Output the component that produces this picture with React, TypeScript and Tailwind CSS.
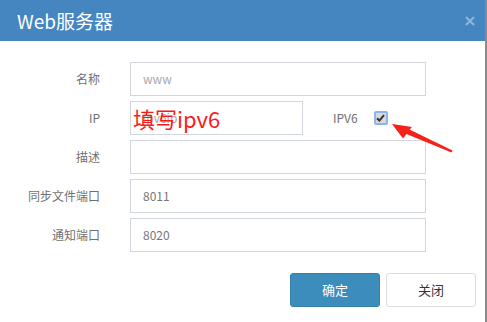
import React from 'react';

const font = { fontFamily: '"Noto Sans CJK SC", "Noto Sans", sans-serif' };

function Row({ label, children }: { label: string; children: React.ReactNode }) {
  return (
    <div className="flex items-center h-[34px]">
      <div className="w-[100px] text-right text-[12px] text-[#707070]">{label}</div>
      <div className="ml-[30px] flex items-center">{children}</div>
    </div>
  );
}

function Field({ value, placeholder, w = 'w-[296px]' }: { value?: string; placeholder?: string; w?: string }) {
  return (
    <div className={`${w} h-[34px] border border-[#d2d6de] flex items-center pl-[12px] text-[12px]`}>
      {value ? (
        <span className="text-[#777]">{value}</span>
      ) : (
        <span className="text-[#aaa]">{placeholder}</span>
      )}
    </div>
  );
}

export default function App() {
  return (
    <div className="w-[487px] h-[322px] flex bg-white overflow-hidden" style={font}>
      <div className="relative w-[485px] h-full flex flex-col">
        {/* Header */}
        <div className="h-[41px] bg-[#4586c1] flex items-center justify-between pl-[17px] pr-[10px]">
          <span className="text-white text-[19px] leading-none">Web服务器</span>
          <svg width="10" height="10" viewBox="0 0 10 10">
            <path d="M1 1 L9 9 M9 1 L1 9" stroke="#8fb6dd" strokeWidth="2" />
          </svg>
        </div>

        {/* Form */}
        <div className="flex flex-col gap-[5px] pt-[21px]">
          <Row label="名称">
            <Field placeholder="www" />
          </Row>
          <Row label="IP">
            <div className="relative">
              <Field placeholder="ipv6ip" w="w-[173px]" />
              <span className="absolute left-[3px] top-[2px] text-[22px] leading-[30px] text-[#ff1a1a]">填写ipv6</span>
            </div>
            <span className="ml-[30px] text-[12px] text-[#707070]">IPV6</span>
            <div className="ml-[16px] w-[14px] h-[14px] rounded-[2px] border-2 border-[#8db4f0] bg-[#d8d8d8] flex items-center justify-center">
              <svg width="9" height="8" viewBox="0 0 9 8">
                <path d="M1 4.2 L3.4 6.6 L8 1.2" fill="none" stroke="#333" strokeWidth="2" />
              </svg>
            </div>
          </Row>
          <Row label="描述">
            <Field />
          </Row>
          <Row label="同步文件端口">
            <Field value="8011" />
          </Row>
          <Row label="通知端口">
            <Field value="8020" />
          </Row>
        </div>

        {/* Buttons */}
        <div className="flex justify-end gap-[6px] pr-[9px] mt-[21px]">
          <button className="w-[90px] h-[34px] rounded-[3px] bg-[#3c8dbc] border border-[#367fa9] text-white text-[13px]">
            确定
          </button>
          <button className="w-[90px] h-[34px] rounded-[3px] bg-white border border-[#ddd] text-[#333] text-[13px]">
            关闭
          </button>
        </div>

        {/* Annotation arrow */}
        <svg className="absolute left-0 top-0 pointer-events-none" width="485" height="322">
          <polygon
            points="392,124 412,127 409.5,129.5 452.5,150.5 451.5,152.5 406.5,134 403,138.5"
            fill="#f5221b"
          />
        </svg>
      </div>
      <div className="w-[2px] h-full bg-[#8a8a8a]" />
    </div>
  );
}
